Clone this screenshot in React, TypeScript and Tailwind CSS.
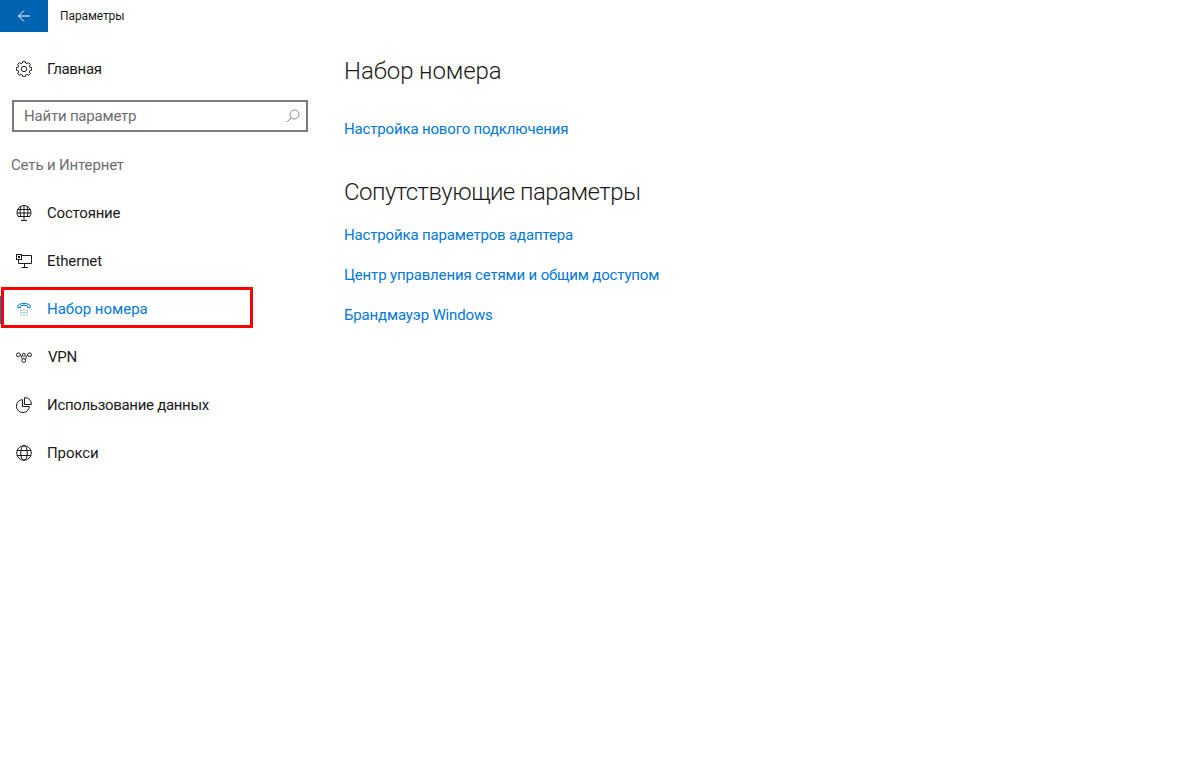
import { ReactNode } from 'react'

const font = { fontFamily: 'Roboto, sans-serif' }

// outline of an 8 tooth gear, worked out from the angles
const gearPath = () => {
  const pts: string[] = []
  for (let i = 0; i < 8; i++) {
    const a = (i * Math.PI) / 4 - Math.PI / 2
    const corners: [number, number][] = [
      [6, a - 0.3],
      [7.8, a - 0.17],
      [7.8, a + 0.17],
      [6, a + 0.3],
    ]
    corners.forEach(([r, t]) => {
      pts.push(`${(8 + r * Math.cos(t)).toFixed(2)} ${(8 + r * Math.sin(t)).toFixed(2)}`)
    })
  }
  return `M${pts.join('L')}Z`
}

function GearIcon() {
  return (
    <svg width="16" height="16" viewBox="0 0 16 16" fill="none" stroke="#1a1a1a" strokeWidth="1">
      <circle cx="8" cy="8" r="2.7" />
      <path d={gearPath()} />
    </svg>
  )
}

function StatusIcon() {
  return (
    <svg width="16" height="17" viewBox="0 0 16 17" fill="none" stroke="#1a1a1a" strokeWidth="1">
      <path d="M2.300 11.500A7 7 0 1 1 13.700 11.500" />
      <path d="M8 .800V11.500M5 1.500C3.800 4.500 3.800 8.500 4.800 11.500M11 1.500C12.200 4.500 12.200 8.500 11.200 11.500M1.600 4.500H14.400M1 8H15" />
      <path d="M2 11.500H14M8 11.500V15.500M5 15.500H11" />
    </svg>
  )
}

function EthernetIcon() {
  return (
    <svg width="16" height="14" viewBox="0 0 16 14" fill="none" stroke="#1a1a1a" strokeWidth="1">
      <path d="M5.500 1.500H15.500V9.500H2.500V5.500" />
      <rect x="0.500" y="0.500" width="5" height="5" fill="#fff" />
      <rect x="2" y="2" width="2" height="2" fill="#1a1a1a" stroke="none" />
      <path d="M8.500 9.500V13.500M5.500 13.500H12" />
    </svg>
  )
}

function DialIcon() {
  return (
    <svg width="14" height="14" viewBox="0 0 14 14" fill="none" stroke="#0078d7" strokeWidth="1">
      <path d="M.600 4.500C.600 .500 13.400 .500 13.400 4.500V5.500H10.500V4C9 3 5 3 3.500 4V5.500H.600Z" />
      <path d="M3.500 8h1M6.500 8h1M9.500 8h1M3.500 10.500h1M6.500 10.500h1M9.500 10.500h1M3.500 13h1M6.500 13h1M9.500 13h1" />
    </svg>
  )
}

function VpnIcon() {
  return (
    <svg width="16" height="11" viewBox="0 0 16 11" fill="none" stroke="#1a1a1a" strokeWidth="1">
      <circle cx="2.400" cy="2.800" r="1.900" />
      <circle cx="13.600" cy="2.800" r="1.900" />
      <circle cx="7.800" cy="8.500" r="1.900" />
      <circle cx="7.800" cy="2.800" r="1.500" />
      <path d="M4.300 2.800C5.500 2.800 5.800 6.800 6.500 7M11.700 2.800C10.500 2.800 10 6.800 9.300 7.400" />
    </svg>
  )
}

function DataIcon() {
  return (
    <svg width="16" height="16" viewBox="0 0 16 16" fill="none" stroke="#1a1a1a" strokeWidth="1">
      <path d="M6.500 2.600A6.500 6.500 0 1 0 13.400 9.500H6.500Z" />
      <path d="M8.500 .600A6.500 6.500 0 0 1 15.400 7.500H8.500Z" />
    </svg>
  )
}

function GlobeIcon() {
  return (
    <svg width="16" height="16" viewBox="0 0 16 16" fill="none" stroke="#1a1a1a" strokeWidth="1">
      <circle cx="8" cy="8" r="7.300" />
      <ellipse cx="8" cy="8" rx="3.300" ry="7.300" />
      <path d="M1.200 5.500h13.600M1.200 10.500h13.600" />
    </svg>
  )
}

function NavRow({ icon, label, active, className = '' }: { icon: ReactNode; label: string; active?: boolean; className?: string }) {
  return (
    <div className={`relative flex h-12 items-center text-[15px] ${active ? 'text-[#0078d7]' : 'text-[#1a1a1a]'}`}>
      {active && <div className="absolute left-0 top-[11px] h-[28px] w-[2px] bg-[#0078d7]" />}
      <div className="flex w-[47px] shrink-0 justify-center pl-[1px]">
        <div className="flex w-[16px] items-center justify-center">{icon}</div>
      </div>
      <span className={className}>{label}</span>
    </div>
  )
}

function LinkRow({ label }: { label: string }) {
  return <div className="flex h-10 items-center text-[15px] tracking-[-0.16px] text-[#0078d7]">{label}</div>
}

export default function App() {
  return (
    <div className="relative flex h-[783px] w-[1200px] flex-col overflow-hidden bg-white" style={font}>
      {/* Title bar */}
      <div className="flex h-8 items-center">
        <div className="flex h-8 w-12 items-center justify-center bg-[#0063b1]">
          <svg width="14" height="14" viewBox="0 0 14 14" fill="none" stroke="#fff" strokeWidth="1">
            <path d="M13 7H1.500M7 1.500 1.500 7 7 12.500" />
          </svg>
        </div>
        <span className="ml-3 text-xs tracking-[-0.1px] text-[#1a1a1a]">Параметры</span>
      </div>

      <div className="flex flex-1">
        {/* Sidebar */}
        <div className="w-[320px] shrink-0 pt-[13px]">
          <NavRow icon={<GearIcon />} label="Главная" className="tracking-[-0.35px]" />
          <div className="mx-3 mt-[7px] flex h-8 w-[296px] items-center justify-between border-2 border-[#7a7a7a] pl-[10px] pr-[6px] text-[15px] text-[#6d6d6d]">
            <span className="tracking-[-0.2px]">Найти параметр</span>
            <svg width="14" height="14" viewBox="0 0 14 14" fill="none" stroke="#8a8a8a" strokeWidth="1">
              <circle cx="8.500" cy="5.500" r="4.500" />
              <path d="M5.300 8.700 1 13" />
            </svg>
          </div>
          <div className="mt-[21px] pl-[11px] text-[15px] leading-[24px] tracking-[-0.15px] text-[#6d6d6d]">Сеть и Интернет</div>
          <div className="mt-[12px]">
            <NavRow icon={<StatusIcon />} label="Состояние" className="tracking-[-0.2px]" />
            <NavRow icon={<EthernetIcon />} label="Ethernet" className="tracking-[-0.12px]" />
            <NavRow icon={<DialIcon />} label="Набор номера" active />
            <NavRow icon={<VpnIcon />} label="VPN" className="ml-[1px] tracking-[-0.2px]" />
            <NavRow icon={<DataIcon />} label="Использование данных" className="tracking-[-0.3px]" />
            <NavRow icon={<GlobeIcon />} label="Прокси" className="tracking-[-0.1px]" />
          </div>
        </div>

        {/* Content */}
        <div className="flex-1 pl-6">
          <h1 className="mt-[19px] text-[24px] font-light leading-[40px] tracking-[-0.1px] text-[#1a1a1a]">Набор номера</h1>
          <div className="mt-[18px]">
            <LinkRow label="Настройка нового подключения" />
          </div>
          <h2 className="mt-[23px] text-[24px] font-light leading-[40px] tracking-[-0.53px] text-[#1a1a1a]">Сопутствующие параметры</h2>
          <div className="mt-[3px]">
            <LinkRow label="Настройка параметров адаптера" />
            <LinkRow label="Центр управления сетями и общим доступом" />
            <LinkRow label="Брандмауэр Windows" />
          </div>
        </div>
      </div>

      {/* Red annotation box */}
      <div className="absolute left-[1px] top-[287px] h-[41px] w-[252px] border-[3px] border-[#ff0000]" />
    </div>
  )
}
